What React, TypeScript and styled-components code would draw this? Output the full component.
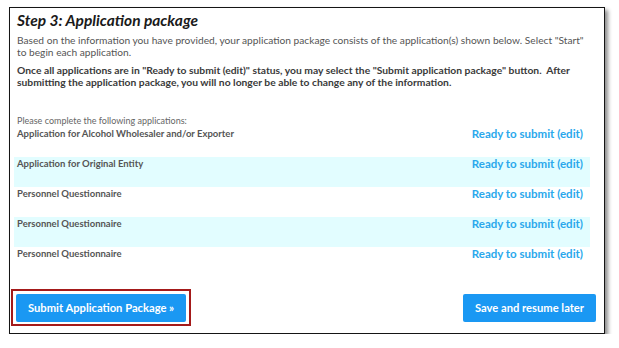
import React from 'react'
import styled, { createGlobalStyle } from 'styled-components'

const GlobalStyle = createGlobalStyle`
    html, body {
        margin : 0;
        padding : 0;
        background : #ffffff;
    }
    body {
        font-family : Lato, "Open Sans", "Liberation Sans", sans-serif;
    }
`

interface Application {
    name: string
}

const applications: Application[] = [
    { name: 'Application for Alcohol Wholesaler and/or Exporter' },
    { name: 'Application for Original Entity' },
    { name: 'Personnel Questionnaire' },
    { name: 'Personnel Questionnaire' },
    { name: 'Personnel Questionnaire' },
]

const App = () => {
    return (
        <Page>
            <GlobalStyle />
            <Frame>
                <Title>Step 3: Application package</Title>
                <Intro>
                    Based on the information you have provided, your application package consists of the application(s) shown below. Select "Start" to begin each application.
                </Intro>
                <Notice>
                    Once all applications are in "Ready to submit (edit)" status, you may select the "Submit application package" button.&nbsp; After submitting the application package, you will no longer be able to change any of the information.
                </Notice>

                <ListLabel>Please complete the following applications:</ListLabel>
                <List>
                    {applications.map((app, i) => (
                        <Row key={`app_${i}`} shaded={i % 2 === 1}>
                            <AppName>{app.name}</AppName>
                            <StatusLink>Ready to submit (edit)</StatusLink>
                        </Row>
                    ))}
                </List>

                <Footer>
                    <Highlight>
                        <PrimaryButton>Submit Application Package »</PrimaryButton>
                    </Highlight>
                    <PrimaryButton>Save and resume later</PrimaryButton>
                </Footer>
            </Frame>
        </Page>
    )
}

const Page = styled.div`
    padding : 7px 0 0 9px;
`

const Frame = styled.div`
    box-sizing : border-box;
    width : 596px;
    height : 327px;
    border : 1.5px solid #151515;
    background : #ffffff;
    box-shadow : 3px 3px 4px rgba(0, 0, 0, 0.45);
    padding : 3px 0 0 7px;
    display : flex;
    flex-direction : column;
`

const Title = styled.h1`
    margin : 0;
    font-size : 15.5px;
    line-height : 18px;
    font-style : italic;
    font-weight : bold;
    color : #1a1a1a;
`

const Intro = styled.p`
    margin : 5px 0 0;
    font-size : 10.2px;
    line-height : 12px;
    color : #555555;
    padding-right : 15px;
`

const Notice = styled.p`
    margin : 6px 0 0;
    font-size : 10.3px;
    line-height : 12px;
    font-weight : bold;
    color : #3a3a3a;
    padding-right : 6px;
`

const ListLabel = styled.div`
    margin-top : 27px;
    font-size : 9px;
    line-height : 12px;
    color : #666666;
`

const List = styled.div`
    margin-left : -3px;
    width : 576px;
`

const Row = styled.div<{ shaded?: boolean }>`
    display : flex;
    justify-content : space-between;
    align-items : flex-start;
    height : 30px;
    padding : 0 7px 0 3px;
    box-sizing : border-box;
    background : ${props => props.shaded ? '#e2fdff' : 'transparent'};
`

const AppName = styled.span`
    font-size : 9.5px;
    line-height : 14px;
    font-weight : bold;
    color : #555555;
`

const StatusLink = styled.a`
    font-size : 11.5px;
    line-height : 14px;
    font-weight : bold;
    color : #2aa8ec;
    cursor : pointer;
`

const Footer = styled.div`
    margin-top : auto;
    margin-bottom : 7px;
    margin-left : -6px;
    margin-right : 8px;
    display : flex;
    justify-content : space-between;
    align-items : center;
`

const Highlight = styled.div`
    border : 2px solid #a41a1a;
    padding : 3px 3px 2px 3px;
`

const PrimaryButton = styled.div`
    background : #1a98f3;
    color : #ffffff;
    font-size : 11.2px;
    font-weight : bold;
    border-radius : 2px;
    height : 28px;
    line-height : 28px;
    padding : 0 12px;
    white-space : nowrap;
    cursor : pointer;
`

export default App
